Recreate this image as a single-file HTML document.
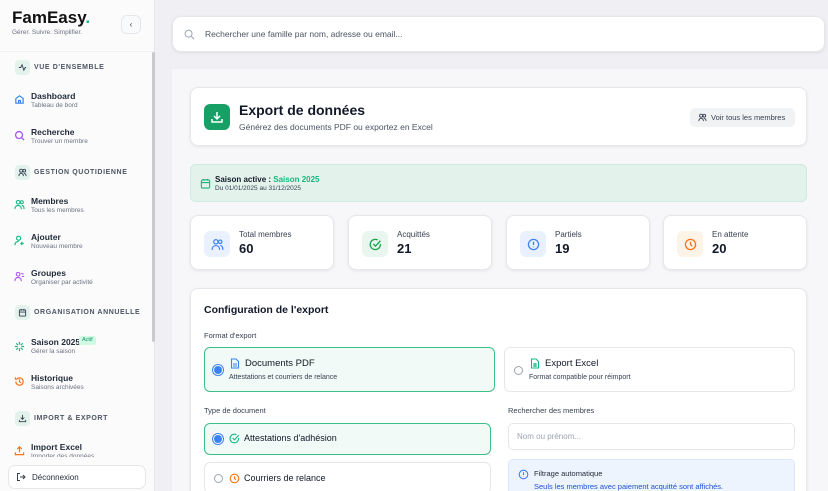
<!DOCTYPE html><html><head><meta charset="utf-8"><style>
*{box-sizing:border-box;margin:0;padding:0}
html,body{width:828px;height:491px;overflow:hidden}
body{font-family:"Liberation Sans",sans-serif;background:#f0f0f4;position:relative;color:#111827;line-height:1.2}
.a{position:absolute}
.sb{left:0;top:0;width:155px;height:491px;background:#fbfbfc;border-right:1px solid #e5e7eb}
.card{background:#fff;border:1px solid #e5e7eb;border-radius:8px;box-shadow:0 1px 3px rgba(0,0,0,.08)}
.sec{font-size:7px;font-weight:bold;letter-spacing:.6px;color:#4b5563}
.secic{width:15px;height:15px;border-radius:4px;background:#e3f3ec}
.it b{font-size:8.5px;color:#1f2937;display:block;line-height:10px}
.it span{font-size:6.5px;color:#6b7280;display:block;line-height:9px}
svg{display:block}
.ic svg,.secic svg{margin:auto}
.st .ic{width:26px;height:26px;border-radius:6px;position:absolute;left:13px;top:15px;display:flex;align-items:center}
.st .l{position:absolute;left:48px;top:14px;font-size:8px;color:#374151}
.st .v{position:absolute;left:48px;top:25px;font-size:13px;font-weight:bold}
.si{position:absolute;left:14px}
</style></head><body>
<div class="a sb">
 <div class="a" style="left:12px;top:8px;font-size:17px;font-weight:bold;color:#111">FamEasy<span style="color:#10b981">.</span></div>
 <div class="a" style="left:12px;top:29px;font-size:6.5px;color:#6b7280">Gérer. Suivre. Simplifier.</div>
 <div class="a" style="left:121px;top:15px;width:20px;height:19px;border:1px solid #e5e7eb;border-radius:6px;background:#f9fafb;font-size:8px;text-align:center;line-height:17px;color:#374151">‹</div>
 <div class="a" style="left:0;top:51px;width:155px;height:1px;background:#eef0f2"></div>
 <div class="a" style="left:152px;top:52px;width:3px;height:290px;background:#c8cacd;border-radius:2px"></div>
 <div class="a secic" style="left:15px;top:60px;display:flex;align-items:center"><svg width="9" height="9" viewBox="0 0 10 10" fill="none" stroke="#374151" stroke-width="1"><path d="M1 5h2l1.5-3 2 6 1.5-3h1"/></svg></div><div class="a sec" style="left:34px;top:64px">VUE D'ENSEMBLE</div>
 <div class="a it" style="left:31px;top:91px"><b>Dashboard</b><span>Tableau de bord</span></div>
 <svg class="si" style="top:94px" width="11" height="11" viewBox="0 0 12 12" fill="none" stroke="#3b82f6" stroke-width="1.3"><path d="M2 5l4-3 4 3v5H2z M5 10V7h2v3"/></svg>
 <div class="a it" style="left:31px;top:127px"><b>Recherche</b><span>Trouver un membre</span></div>
 <svg class="si" style="top:130px" width="11" height="11" viewBox="0 0 12 12" fill="none" stroke="#a855f7" stroke-width="1.4"><circle cx="5.5" cy="5.5" r="3.8"/><path d="M8.5 8.5l2.5 2.5"/></svg>
 <div class="a secic" style="left:15px;top:165px;display:flex;align-items:center"><svg width="9" height="9" viewBox="0 0 10 10" fill="none" stroke="#374151" stroke-width="1"><circle cx="3.5" cy="3" r="1.7"/><circle cx="7" cy="3" r="1.5"/><path d="M1 9c0-2 1-3 2.5-3S6 7 6 9M6.5 6c1.5 0 2.5 1 2.5 3"/></svg></div><div class="a sec" style="left:34px;top:169px">GESTION QUOTIDIENNE</div>
 <div class="a it" style="left:31px;top:196px"><b>Membres</b><span>Tous les membres</span></div>
 <svg class="si" style="top:199px" width="11" height="11" viewBox="0 0 12 12" fill="none" stroke="#10b981" stroke-width="1.2"><circle cx="4.5" cy="3.5" r="2"/><circle cx="8.5" cy="3.5" r="1.6"/><path d="M1 11c0-2.5 1.5-4 3.5-4S8 8.5 8 11M8.5 7c1.5 0 2.5 1.5 2.5 4"/></svg>
 <div class="a it" style="left:31px;top:232px"><b>Ajouter</b><span>Nouveau membre</span></div>
 <svg class="si" style="top:235px" width="11" height="11" viewBox="0 0 12 12" fill="none" stroke="#10b981" stroke-width="1.3"><circle cx="5" cy="3.5" r="2.2"/><path d="M1 11c0-2.5 1.5-4 4-4M8.5 7.5v3.5M7 9.3h3.5"/></svg>
 <div class="a it" style="left:31px;top:268px"><b>Groupes</b><span>Organiser par activité</span></div>
 <svg class="si" style="top:271px" width="11" height="11" viewBox="0 0 12 12" fill="none" stroke="#a855f7" stroke-width="1.2"><circle cx="4.5" cy="3.5" r="2"/><path d="M1 11c0-2.5 1.5-4 3.5-4S8 8.5 8 11M8 2.5l2.5 1M8.5 6h2.5"/></svg>
 <div class="a secic" style="left:15px;top:305px;display:flex;align-items:center"><svg width="9" height="9" viewBox="0 0 10 10" fill="none" stroke="#374151" stroke-width="1"><rect x="1.5" y="2" width="7" height="7" rx="1"/><path d="M1.5 4.5h7M3.5 1v2M6.5 1v2"/></svg></div><div class="a sec" style="left:34px;top:309px">ORGANISATION ANNUELLE</div>
 <div class="a it" style="left:31px;top:337px"><b>Saison 2025</b><span>Gérer la saison</span></div>
 <div class="a" style="left:79px;top:336px;background:#d1fae5;color:#059669;font-size:5.5px;padding:1px 3px;border-radius:2px">Actif</div>
 <svg class="si" style="top:341px" width="11" height="11" viewBox="0 0 12 12" fill="none" stroke="#10b981" stroke-width="1.3"><path d="M6 1v3M6 8v3M1 6h3M8 6h3M2.5 2.5l2 2M7.5 7.5l2 2M2.5 9.5l2-2M7.5 4.5l2-2"/></svg>
 <div class="a it" style="left:31px;top:373px"><b>Historique</b><span>Saisons archivées</span></div>
 <svg class="si" style="top:376px" width="11" height="11" viewBox="0 0 12 12" fill="none" stroke="#f97316" stroke-width="1.3"><path d="M2 6a4 4 0 1 0 1.2-2.8M1.5 1.5v2h2M6 3.5V6l1.5 1.5"/></svg>
 <div class="a secic" style="left:15px;top:411px;display:flex;align-items:center"><svg width="9" height="9" viewBox="0 0 10 10" fill="none" stroke="#374151" stroke-width="1"><path d="M5 1v5M3 4l2 2 2-2M1.5 6.5v2h7v-2"/></svg></div><div class="a sec" style="left:34px;top:415px">IMPORT &amp; EXPORT</div>
 <div class="a it" style="left:31px;top:442px"><b>Import Excel</b><span>Importer des données</span></div>
 <svg class="si" style="top:445px" width="11" height="11" viewBox="0 0 12 12" fill="none" stroke="#f97316" stroke-width="1.3"><path d="M6 8V2M3.5 4.5L6 2l2.5 2.5M1.5 8v2.5h9V8"/></svg>
 <div class="a" style="left:0;top:457px;width:152px;height:34px;background:#fbfbfc"></div>
 <div class="a" style="left:8px;top:465px;width:138px;height:24px;border:1px solid #e5e7eb;border-radius:7px;background:#fff;font-size:8px;color:#1f2937;padding:7px 0 0 23px">Déconnexion
  <svg class="a" style="left:7px;top:6px" width="10" height="10" viewBox="0 0 10 10" fill="none" stroke="#374151" stroke-width="1"><path d="M4 1.5H1.5v7H4M4 5h5M7 3l2 2-2 2"/></svg></div>
</div>
<div class="a card" style="left:172px;top:16px;width:653px;height:36px;border-radius:9px">
 <svg class="a" style="left:11px;top:12px" width="11" height="11" viewBox="0 0 12 12" fill="none" stroke="#9ca3af" stroke-width="1.1"><circle cx="5" cy="5" r="3.8"/><path d="M8 8l3 3"/></svg>
 <div class="a" style="left:32px;top:12px;font-size:8.5px;color:#4b5563">Rechercher une famille par nom, adresse ou email...</div>
</div>
<div class="a" style="left:172px;top:69px;width:656px;height:422px;background:#f7f7f9"></div>
<div class="a card" style="left:190px;top:87px;width:617px;height:59px">
 <div class="a" style="left:13px;top:16px;width:26px;height:26px;border-radius:6px;background:#16a066"><svg width="26" height="26" viewBox="0 0 26 26" fill="none" stroke="#fff" stroke-width="1.5"><path d="M13 8v7M10 12l3 3 3-3M8 15v3h10v-3"/></svg></div>
 <div class="a" style="left:48px;top:14px;font-size:14px;font-weight:bold">Export de données</div>
 <div class="a" style="left:48px;top:34px;font-size:8.5px;color:#4b5563">Générez des documents PDF ou exportez en Excel</div>
 <div class="a" style="left:499px;top:20px;width:105px;height:19px;background:#f1f2f4;border-radius:5px;font-size:7.5px;color:#374151;padding:5px 0 0 21px">Voir tous les membres
  <svg class="a" style="left:8px;top:5px" width="9" height="9" viewBox="0 0 10 10" fill="none" stroke="#374151" stroke-width="1"><circle cx="3.5" cy="3" r="1.7"/><circle cx="7" cy="3" r="1.5"/><path d="M1 9c0-2 1-3 2.5-3S6 7 6 9M6.5 6c1.5 0 2.5 1 2.5 3"/></svg></div>
</div>
<div class="a" style="left:190px;top:164px;width:617px;height:38px;background:#e3f3ec;border:1px solid #cfe9de;border-radius:6px">
 <svg class="a" style="left:9px;top:13px" width="11" height="11" viewBox="0 0 12 12" fill="none" stroke="#10b981" stroke-width="1.2"><rect x="1.5" y="2" width="9" height="9" rx="1.5"/><path d="M1.5 5h9M4 1v2M8 1v2"/></svg>
 <div class="a" style="left:24px;top:10px;font-size:8px;font-weight:bold">Saison active : <span style="color:#10b981">Saison 2025</span></div>
 <div class="a" style="left:24px;top:20px;font-size:6.5px;color:#374151">Du 01/01/2025 au 31/12/2025</div>
</div>
<div class="a card st" style="left:190px;top:215px;width:144px;height:55px"><div class="ic" style="background:#eaf1fe"><svg width="13" height="13" viewBox="0 0 12 12" fill="none" stroke="#3b82f6" stroke-width="1.1"><circle cx="4.5" cy="3.5" r="2"/><circle cx="8.5" cy="3.5" r="1.6"/><path d="M1 11c0-2.5 1.5-4 3.5-4S8 8.5 8 11M8.5 7c1.5 0 2.5 1.5 2.5 4"/></svg></div><div class="l">Total membres</div><div class="v">60</div></div>
<div class="a card st" style="left:348px;top:215px;width:144px;height:55px"><div class="ic" style="background:#e8f6ef"><svg width="13" height="13" viewBox="0 0 12 12" fill="none" stroke="#16a34a" stroke-width="1.2"><path d="M10.5 5.5A4.7 4.7 0 1 1 8 1.8"/><path d="M4 5.5l2 2 4.5-5"/></svg></div><div class="l">Acquittés</div><div class="v">21</div></div>
<div class="a card st" style="left:506px;top:215px;width:144px;height:55px"><div class="ic" style="background:#eaf1fe"><svg width="13" height="13" viewBox="0 0 12 12" fill="none" stroke="#3b82f6" stroke-width="1.2"><circle cx="6" cy="6" r="4.7"/><path d="M6 3.5v3M6 8v.5"/></svg></div><div class="l">Partiels</div><div class="v">19</div></div>
<div class="a card st" style="left:663px;top:215px;width:144px;height:55px"><div class="ic" style="background:#fdf3e6"><svg width="13" height="13" viewBox="0 0 12 12" fill="none" stroke="#f97316" stroke-width="1.2"><circle cx="6" cy="6" r="4.7"/><path d="M6 3.5V6l1.5 1.5"/></svg></div><div class="l">En attente</div><div class="v">20</div></div>
<div class="a card" style="left:190px;top:288px;width:617px;height:220px">
 <div class="a" style="left:13px;top:15px;font-size:10.5px;font-weight:bold">Configuration de l'export</div>
 <div class="a" style="left:13px;top:42px;font-size:7.5px;color:#374151">Format d'export</div>
 <div class="a" style="left:13px;top:58px;width:291px;height:45px;border:1.5px solid #3cbf8a;border-radius:6px;background:#f1faf6">
  <div class="a" style="left:9px;top:18px;width:8px;height:8px;border-radius:50%;background:#3b82f6;box-shadow:0 0 0 1px #fff,0 0 0 2px #3b82f6"></div>
  <svg class="a" style="left:25px;top:10px" width="10" height="11" viewBox="0 0 10 11" fill="none" stroke="#3b82f6" stroke-width="1.1"><path d="M1.5 1h4.5l2.5 2.5V10h-7z M3 6h4M3 8h4"/></svg>
  <div class="a" style="left:40px;top:10px;font-size:9.5px">Documents PDF</div>
  <div class="a" style="left:24px;top:26px;font-size:7px;color:#374151">Attestations et courriers de relance</div>
 </div>
 <div class="a" style="left:313px;top:58px;width:291px;height:45px;border:1px solid #e5e7eb;border-radius:6px;background:#fff">
  <div class="a" style="left:9px;top:18px;width:9px;height:9px;border-radius:50%;border:1px solid #9ca3af"></div>
  <svg class="a" style="left:25px;top:10px" width="10" height="11" viewBox="0 0 10 11" fill="none" stroke="#10b981" stroke-width="1.1"><path d="M1.5 1h4.5l2.5 2.5V10h-7z M3 6h4M3 8h4M5 5v4"/></svg>
  <div class="a" style="left:40px;top:10px;font-size:9.5px">Export Excel</div>
  <div class="a" style="left:24px;top:26px;font-size:7px;color:#374151">Format compatible pour réimport</div>
 </div>
 <div class="a" style="left:13px;top:117px;font-size:7.5px;color:#374151">Type de document</div>
 <div class="a" style="left:13px;top:134px;width:287px;height:32px;border:1.5px solid #3cbf8a;border-radius:6px;background:#f1faf6">
  <div class="a" style="left:9px;top:11px;width:8px;height:8px;border-radius:50%;background:#3b82f6;box-shadow:0 0 0 1px #fff,0 0 0 2px #3b82f6"></div>
  <svg class="a" style="left:24px;top:9px" width="11" height="11" viewBox="0 0 12 12" fill="none" stroke="#10b981" stroke-width="1.2"><path d="M10.5 5.5A4.7 4.7 0 1 1 8 1.8"/><path d="M4 5.5l2 2 4.5-5"/></svg>
  <div class="a" style="left:39px;top:9px;font-size:9px">Attestations d'adhésion</div>
 </div>
 <div class="a" style="left:13px;top:173px;width:287px;height:32px;border:1px solid #e5e7eb;border-radius:6px;background:#fff">
  <div class="a" style="left:9px;top:11px;width:9px;height:9px;border-radius:50%;border:1px solid #9ca3af"></div>
  <svg class="a" style="left:24px;top:10px" width="11" height="11" viewBox="0 0 12 12" fill="none" stroke="#f97316" stroke-width="1.2"><circle cx="6" cy="6" r="4.7"/><path d="M6 3.5V6l1.5 1.5"/></svg>
  <div class="a" style="left:39px;top:10px;font-size:9px">Courriers de relance</div>
 </div>
 <div class="a" style="left:317px;top:117px;font-size:7.5px;color:#374151">Rechercher des membres</div>
 <div class="a" style="left:317px;top:134px;width:287px;height:27px;border:1px solid #e5e7eb;border-radius:5px;background:#fff;font-size:8px;color:#9ca3af;padding:8px 0 0 8px">Nom ou prénom...</div>
 <div class="a" style="left:317px;top:170px;width:287px;height:40px;border:1px solid #dbe8fb;border-radius:5px;background:#eef4fe">
  <svg class="a" style="left:9px;top:9px" width="11" height="11" viewBox="0 0 12 12" fill="none" stroke="#3b82f6" stroke-width="1.2"><circle cx="6" cy="6" r="4.7"/><path d="M6 3.5v3M6 8v.5"/></svg>
  <div class="a" style="left:25px;top:9px;font-size:7.5px;color:#1f2937">Filtrage automatique</div>
  <div class="a" style="left:25px;top:22px;font-size:7.5px;color:#1d4ed8">Seuls les membres avec paiement acquitté sont affichés.</div>
 </div>
</div>
</body></html>
